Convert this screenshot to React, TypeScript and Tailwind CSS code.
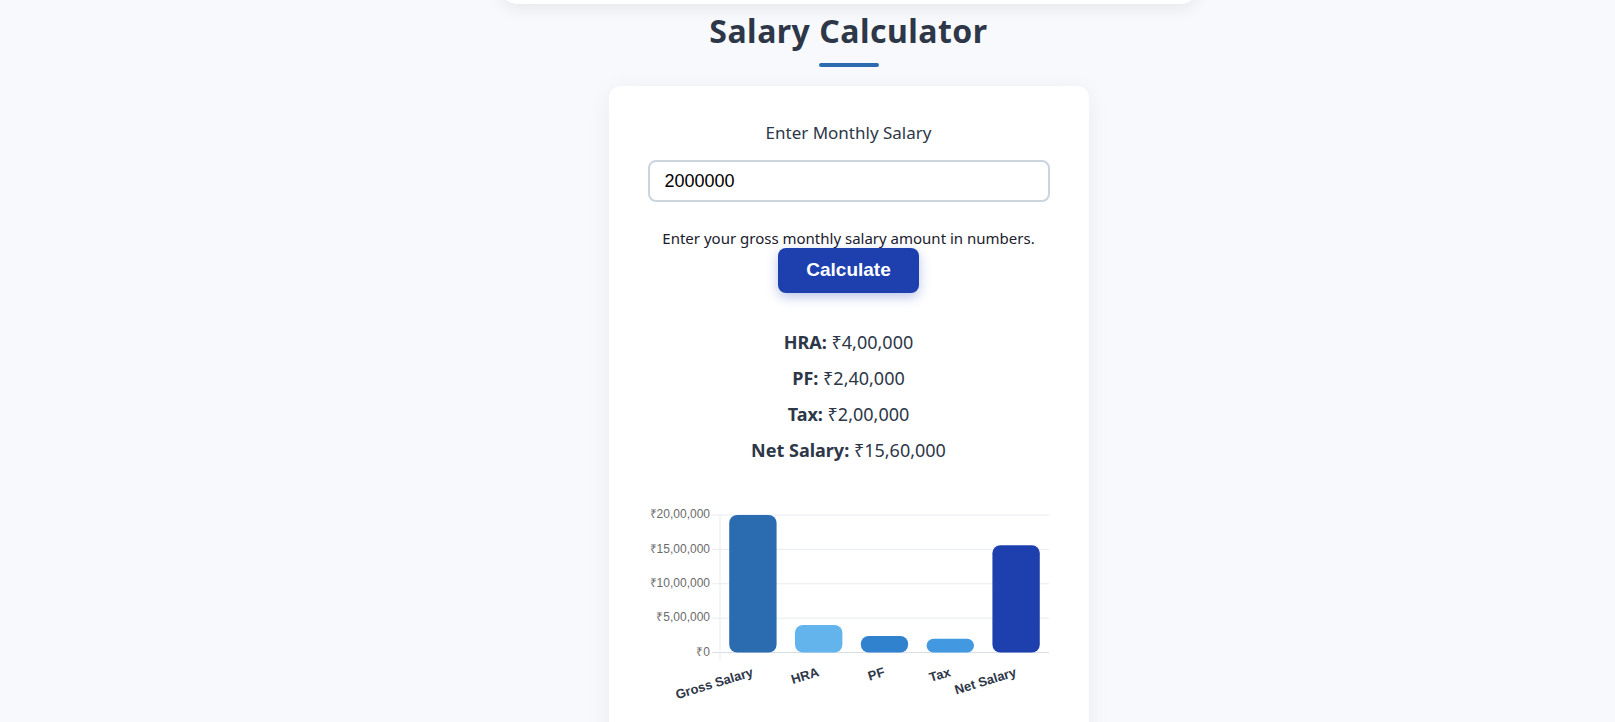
import React from "react";

const bars = [
  { label: "Gross Salary", value: 2000000, color: "#2b6cb0" },
  { label: "HRA", value: 400000, color: "#63b3ed" },
  { label: "PF", value: 240000, color: "#3182ce" },
  { label: "Tax", value: 200000, color: "#4299e1" },
  { label: "Net Salary", value: 1560000, color: "#1e40af" },
];

function roundedBar(x: number, y: number, w: number, h: number, r: number) {
  const rr = Math.min(r, h / 2, w / 2);
  return `M${x + rr},${y} H${x + w - rr} A${rr},${rr} 0 0 1 ${x + w},${y + rr} V${y + h - rr} A${rr},${rr} 0 0 1 ${x + w - rr},${y + h} H${x + rr} A${rr},${rr} 0 0 1 ${x},${y + h - rr} V${y + rr} A${rr},${rr} 0 0 1 ${x + rr},${y} Z`;
}

function Chart() {
  const top = 14;
  const bottom = 151.5;
  const left = 71;
  const right = 400;
  const max = 2000000;
  const ticks = [2000000, 1500000, 1000000, 500000, 0];
  const tickLabels = ["₹20,00,000", "₹15,00,000", "₹10,00,000", "₹5,00,000", "₹0"];
  const cat = (right - left) / bars.length;
  const bw = cat * 0.72;
  return (
    <svg width="400" height="210" viewBox="0 0 400 210" className="block overflow-visible">
      {ticks.map((t, i) => {
        const y = bottom - (t / max) * (bottom - top);
        return (
          <g key={t}>
            <line x1={63} x2={right} y1={y} y2={y} stroke={i === 4 ? "#d9dee7" : "#e8ebf1"} strokeWidth={1} />
            <text
              x={61}
              y={y}
              textAnchor="end"
              dominantBaseline="middle"
              fontFamily="'Liberation Sans', Arial, sans-serif"
              fontSize="12"
              fill="#6b6b6b"
            >
              {tickLabels[i]}
            </text>
          </g>
        );
      })}
      <line x1={left} x2={left} y1={top} y2={bottom + 8} stroke="#e8ebf1" strokeWidth={1} />
      {bars.map((b, i) => {
        const cx = left + cat * (i + 0.5);
        const h = (b.value / max) * (bottom - top);
        const ly = bottom + 20;
        return (
          <g key={b.label}>
            <path d={roundedBar(cx - bw / 2, bottom - h, bw, h, 8)} fill={b.color} />
            <text
              x={cx}
              y={ly}
              textAnchor="end"
              dominantBaseline="middle"
              transform={`rotate(-17 ${cx} ${ly})`}
              fontFamily="'Liberation Sans', Arial, sans-serif"
              fontSize="13"
              fontWeight="bold"
              fill="#2d3748"
            >
              {b.label}
            </text>
          </g>
        );
      })}
    </svg>
  );
}

export default function App() {
  return (
    <div className="min-h-[722px] bg-[#f7f9fc] overflow-hidden" style={{ fontFamily: "'Noto Sans', 'Open Sans', sans-serif" }}>
      <div className="pl-[82px] flex flex-col items-center">
        <div className="w-[696px] h-[60px] -mt-[56px] bg-white rounded-2xl shadow-[0_4px_18px_rgba(0,0,0,0.08)]" />
        <h1 className="mt-[7px] text-[32px] leading-[40px] font-bold tracking-[0.5px] text-[#2d3748]">Salary Calculator</h1>
        <div className="mt-[12px] w-[60px] h-[4px] rounded-full bg-[#2b6cb0]" />
        <div className="mt-[19px] w-[480px] bg-white rounded-xl shadow-[0_4px_24px_rgba(0,0,0,0.06)] px-10 pt-[35px] pb-10 flex flex-col items-center">
          <label className="text-[17px] leading-[24px] text-[#2d3748]">Enter Monthly Salary</label>
          <input
            type="text"
            defaultValue="2000000"
            className="mt-[15px] w-[402px] h-[42px] px-[15px] rounded-lg border-2 border-[#cbd5e0] bg-white text-[18px] text-black outline-none"
            style={{ fontFamily: "'Liberation Sans', Arial, sans-serif" }}
          />
          <p className="mt-[26px] text-[15px] leading-[20px] text-[#1a202c]">Enter your gross monthly salary amount in numbers.</p>
          <button
            className="mt-0 w-[141px] h-[45px] rounded-lg bg-[#1e40af] text-white text-[19px] font-bold shadow-[0_4px_12px_rgba(30,64,175,0.3)]"
            style={{ fontFamily: "'Liberation Sans', Arial, sans-serif" }}
          >
            Calculate
          </button>
          <div className="mt-[31px] flex flex-col items-center text-[18px] leading-[36px] text-[#2d3748]">
            <p><span className="font-bold">HRA:</span> ₹4,00,000</p>
            <p><span className="font-bold">PF:</span> ₹2,40,000</p>
            <p><span className="font-bold">Tax:</span> ₹2,00,000</p>
            <p><span className="font-bold">Net Salary:</span> ₹15,60,000</p>
          </div>
          <div className="mt-[33px]">
            <Chart />
          </div>
        </div>
      </div>
    </div>
  );
}
